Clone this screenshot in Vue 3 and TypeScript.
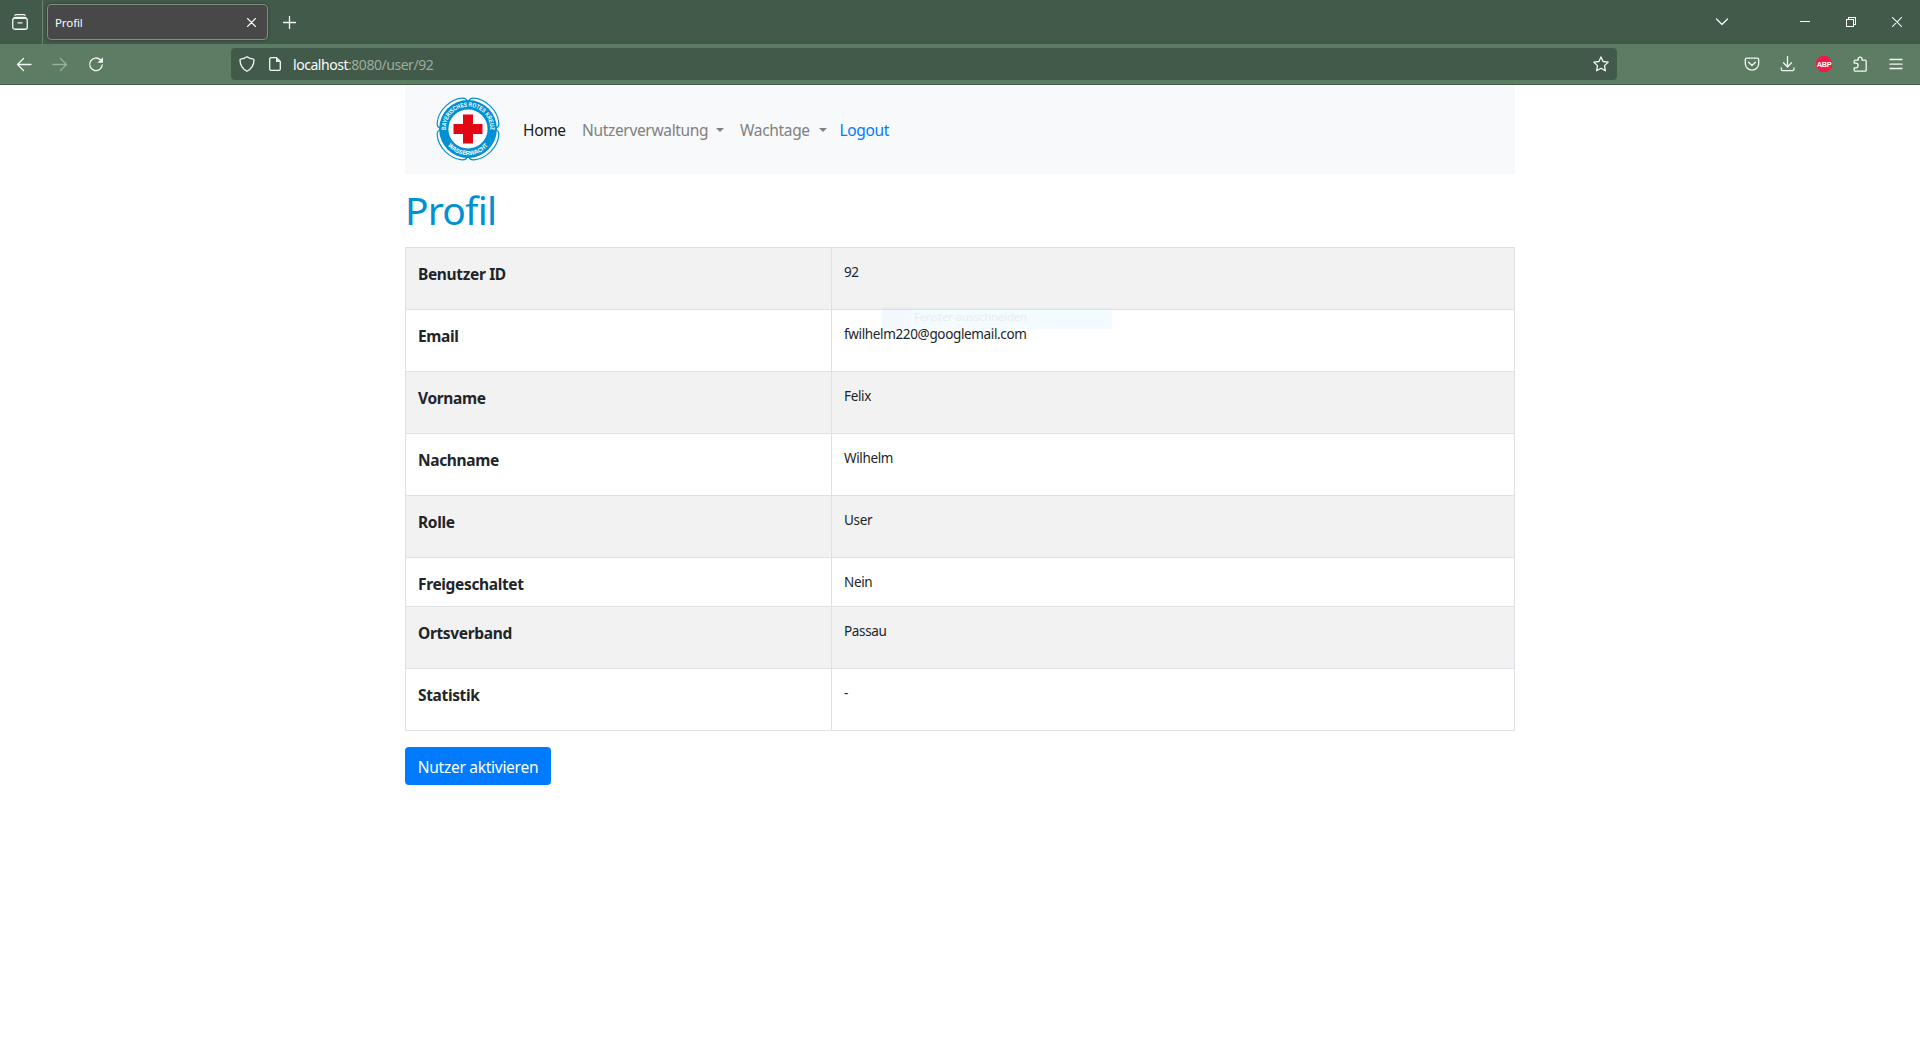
<script setup lang="ts">
interface Row {
  label: string
  value: string
  compact?: boolean
}

const rows: Row[] = [
  { label: 'Benutzer ID', value: '92' },
  { label: 'Email', value: 'fwilhelm220@googlemail.com' },
  { label: 'Vorname', value: 'Felix' },
  { label: 'Nachname', value: 'Wilhelm' },
  { label: 'Rolle', value: 'User' },
  { label: 'Freigeschaltet', value: 'Nein', compact: true },
  { label: 'Ortsverband', value: 'Passau' },
  { label: 'Statistik', value: '-' },
]
</script>

<template>
  <div class="window">
    <header class="tabbar">
      <div class="recent">
        <svg width="16" height="16" viewBox="0 0 16 16" class="line">
          <path d="M3 1.2Q3.3.7 4 .7h8q.7 0 1 .5" />
          <rect x=".75" y="4.25" width="14.5" height="11" rx="2" />
          <path d="M2 4Q2.2 3.3 3 3.3h10q.8 0 1 .7M6 8.8h4" />
        </svg>
      </div>
      <div class="tab">
        <span class="tab-title">Profil</span>
        <svg width="9" height="9" viewBox="0 0 9 9" class="line thin"><path d="M.5.5l8 8M8.500.5l-8 8" /></svg>
      </div>
      <svg class="line plus" width="13" height="13" viewBox="0 0 13 13"><path d="M6.500.5v12M.5 6.500h12" /></svg>
      <div class="window-controls">
        <svg class="line" width="12" height="8" viewBox="0 0 12 8"><path d="M.5 1L6 6.500 11.500 1" /></svg>
        <svg class="line crisp ctl-min" width="10" height="10" viewBox="0 0 10 10"><path d="M0 4.500h10" /></svg>
        <svg class="line crisp ctl-restore" width="10" height="10" viewBox="0 0 10 10">
          <path d="M.5 2.500h7v7h-7zM2.500 2.500v-2h7v7h-2" />
        </svg>
        <svg class="line thin ctl-close" width="10" height="10" viewBox="0 0 10 10"><path d="M0 0l10 10M10 0L0 10" /></svg>
      </div>
    </header>

    <div class="toolbar">
      <div class="history">
        <svg class="line" width="16" height="16" viewBox="0 0 16 16"><path d="M15 8.500H1.500M7.500 2.500l-6 6 6 6" /></svg>
        <svg class="line muted" width="16" height="16" viewBox="0 0 16 16"><path d="M1 8.500h13.500M8.500 2.500l6 6-6 6" /></svg>
        <svg class="line" width="16" height="16" viewBox="0 0 16 16">
          <path d="M12.600 4A6.300 6.300 0 1 0 14.300 8.800" />
          <path class="fill" d="M15 1.200v5.100a.4.4 0 0 1-.4.4H9.500z" />
        </svg>
      </div>
      <div class="urlbar">
        <svg class="line" width="16" height="16" viewBox="0 0 16 16">
          <path d="M8 .7Q5 2.700 1.600 3.100 1 3.200 1 4q.1 7.600 7 11.300Q14.900 11.600 15 4q0-.8-.6-.9Q11 2.700 8 .7z" />
        </svg>
        <svg class="line page" width="12" height="14" viewBox="0 0 12 14">
          <path d="M7.500.7H2A1.300 1.300 0 0 0 .7 2v10A1.300 1.300 0 0 0 2 13.300h8a1.300 1.300 0 0 0 1.300-1.300V4.500z" />
          <path class="fill" d="M7 .7V5h4.500z" />
        </svg>
        <span class="url">localhost<span class="dim">:8080/user/92</span></span>
        <svg class="line star" width="16" height="16" viewBox="0 0 16 16">
          <path d="M8 .9l2.100 4.600 5.100.6-3.700 3.500.9 5.200L8 12.300l-4.400 2.500.9-5.200L.8 6.100l5.100-.6z" />
        </svg>
      </div>
      <div class="actions">
        <svg class="line" width="16" height="16" viewBox="0 0 16 16">
          <path d="M2.800 2.200h10.400q1.500 0 1.500 1.500v3.800a6.700 6.700 0 0 1-13.400 0V3.700q0-1.500 1.500-1.500zM4.600 6.300L8 9.500l3.400-3.200" />
        </svg>
        <svg class="line" width="16" height="16" viewBox="0 0 16 16">
          <path d="M7.500.5v10.300M3.500 6.800l4 4.200 4-4.200M1.300 12v1.300q0 1.400 1.400 1.400h9.900q1.400 0 1.400-1.400V12" />
        </svg>
        <svg class="adblock" width="16" height="16" viewBox="0 0 16 16">
          <path fill="#ed1e45" d="M4.700 0h6.600L16 4.700v6.600L11.300 16H4.700L0 11.300V4.700z" />
          <text x="8" y="11" text-anchor="middle" class="abp">ABP</text>
        </svg>
        <svg class="line" width="16" height="16" viewBox="0 0 16 16">
          <path d="M2.200 7.200V5.200q0-1 1-1h3V3a1.900 1.900 0 0 1 3.800 0v1.200h3.200q1 0 1 1v9q0 1-1 1H3.200q-1 0-1-1v-2.400h1.600a2.200 2.200 0 0 0 0-4.600z" />
        </svg>
        <svg class="line" width="16" height="16" viewBox="0 0 16 16"><path d="M2 3.500h12M2 8.200h12M2 12.500h12" /></svg>
      </div>
    </div>

    <main class="container">
      <nav class="navbar">
        <svg class="logo" width="64" height="64" viewBox="0 0 64 64">
          <defs>
            <path id="arc-top" d="M9.900 34A22.200 22.200 0 1 1 54.100 34" />
            <path id="arc-bottom" d="M5.800 32A26.200 26.200 0 0 0 58.200 32" />
          </defs>
          <g fill="#fff" stroke="#0090d4" stroke-width="1.200">
            <path d="M31 4Q30 .8 26 1.200C14 2 2 14 1.200 26Q.8 30 4 31z" />
            <path d="M33 4Q34 .8 38 1.200C50 2 62 14 62.800 26Q63.200 30 60 31z" />
            <path d="M31 60Q30 63.200 26 62.800C14 62 2 50 1.200 38Q.8 34 4 33z" />
            <path d="M33 60Q34 63.200 38 62.800C50 62 62 50 62.800 38Q63.200 34 60 33z" />
          </g>
          <circle cx="32" cy="32" r="28.900" fill="#0090d4" />
          <circle cx="32" cy="32" r="19.600" fill="#fff" />
          <path fill="#e30613" d="M27 17.500h10V27h9.500v10H37v9.500H27V37h-9.500V27H27z" />
          <text class="logo-text" text-anchor="middle"><textPath href="#arc-top" startOffset="50%" textLength="71" lengthAdjust="spacingAndGlyphs">BAYERISCHES ROTES KREUZ</textPath></text>
          <text class="logo-text" text-anchor="middle"><textPath href="#arc-bottom" startOffset="50%" textLength="46" lengthAdjust="spacingAndGlyphs">WASSERWACHT</textPath></text>
        </svg>
        <ul class="nav">
          <li class="home">Home</li>
          <li class="users">Nutzerverwaltung<i class="caret"></i></li>
          <li class="days">Wachtage<i class="caret"></i></li>
          <li class="logout">Logout</li>
        </ul>
      </nav>

      <h1>Profil</h1>

      <table>
        <tbody>
          <tr v-for="row in rows" :key="row.label" :class="{ compact: row.compact }">
            <th>{{ row.label }}</th>
            <td>{{ row.value }}</td>
          </tr>
        </tbody>
      </table>

      <button type="button">Nutzer aktivieren</button>
    </main>

    <div class="ghost-menu"><span>Fenster ausschneiden</span></div>
  </div>
</template>

<style>
body {
  margin: 0;
  background: #fff;
}
</style>

<style scoped>
.window {
  position: relative;
  height: 1040px;
  overflow: hidden;
  font-family: "Noto Sans", "Open Sans", sans-serif;
  color: #212529;
  background: #fff;
}
svg {
  display: block;
  flex: none;
}
.line {
  fill: none;
  stroke: #f4f7f4;
  stroke-width: 1.3;
  stroke-linecap: round;
  stroke-linejoin: round;
}
.thin {
  stroke-width: 1.1;
}
.crisp {
  stroke-width: 1;
  stroke: #fff;
  stroke-linecap: butt;
  stroke-linejoin: miter;
  shape-rendering: crispEdges;
}
.fill {
  fill: #f4f7f4;
  stroke: none;
}
.muted {
  opacity: 0.4;
}
.tabbar {
  box-sizing: border-box;
  height: 44px;
  display: flex;
  align-items: center;
  background: #425a49;
}
.recent {
  box-sizing: border-box;
  width: 43px;
  height: 44px;
  padding: 14px 0 0 12px;
  border-right: 1px solid #6d8072;
}
.tab {
  box-sizing: border-box;
  width: 221px;
  height: 36px;
  margin-left: 4px;
  padding: 0 11px 0 7px;
  display: flex;
  align-items: center;
  justify-content: space-between;
  background: #484848;
  border: 1px solid #7b907f;
  border-radius: 4px;
  box-shadow: 0 0 3px rgba(0, 0, 0, 0.4);
}
.tab-title {
  padding-top: 1px;
  font-size: 11.5px;
  line-height: 16px;
  color: #fbfbfe;
  letter-spacing: -0.1px;
}
.plus {
  margin: 1px 0 0 15px;
}
.window-controls {
  display: flex;
  align-items: center;
  margin-left: auto;
  padding-right: 18px;
}
.ctl-min {
  margin-left: 72px;
}
.ctl-restore {
  margin-left: 36px;
}
.ctl-close {
  margin-left: 36px;
}
.toolbar {
  box-sizing: border-box;
  height: 41px;
  display: flex;
  align-items: center;
  background: #5c7c64;
  border-bottom: 1px solid #425a49;
}
.history {
  width: 215px;
  padding-left: 16px;
  display: flex;
  gap: 20px;
}
.urlbar {
  box-sizing: border-box;
  width: 1386px;
  height: 32px;
  padding: 0 8px;
  display: flex;
  align-items: center;
  background: #425a49;
  border-radius: 4px;
}
.page {
  margin-left: 14px;
}
.url {
  margin-left: 12px;
  padding-top: 2px;
  font-size: 14px;
  line-height: 20px;
  color: #fbfbfe;
  letter-spacing: -0.46px;
}
.dim {
  color: #9dac9f;
}
.star {
  margin-left: auto;
}
.actions {
  display: flex;
  gap: 20px;
  margin-left: 127px;
}
.adblock {
  overflow: visible;
}
.abp {
  font: 700 7.4px "Liberation Sans Narrow", "Liberation Sans", sans-serif;
  letter-spacing: -0.35px;
  fill: #fff;
}
.container {
  width: 1110px;
  margin: 0 auto;
}
.navbar {
  box-sizing: border-box;
  height: 89px;
  padding: 0 30px 1px 31px;
  display: flex;
  align-items: center;
  background: #f8f9fa;
}
.logo-text {
  font: 700 6.2px "Liberation Sans Narrow", "Liberation Sans", sans-serif;
  fill: #fff;
}
.nav {
  display: flex;
  margin: 1px 0 0 23px;
  padding: 0;
  list-style: none;
  font-size: 15.5px;
  line-height: 24px;
  letter-spacing: -0.33px;
  color: #808182;
}
.nav li {
  display: flex;
  align-items: center;
  white-space: nowrap;
}
.nav .home {
  width: 59px;
  color: #1a1a1a;
}
.nav .users {
  width: 142px;
  margin-right: 16px;
  justify-content: space-between;
}
.nav .days {
  width: 87px;
  margin-right: 12.5px;
  justify-content: space-between;
}
.nav .logout {
  color: #007bff;
}
.caret {
  border: 4px solid transparent;
  border-top-color: currentColor;
  border-bottom: 0;
}
h1 {
  margin: 12px 0 13px;
  height: 48px;
  font-size: 39px;
  font-weight: 400;
  line-height: 47px;
  letter-spacing: -0.8px;
  color: #0090d4;
}
table {
  width: 1110px;
  table-layout: fixed;
  border-collapse: collapse;
}
tr {
  height: 62px;
}
tr.compact {
  height: 49px;
}
tr:nth-child(odd) {
  background: #f2f2f2;
}
th,
td {
  border: 1px solid #dee2e6;
  vertical-align: top;
  text-align: left;
}
th {
  width: 401px;
  padding: 14px 12px 0;
  font-size: 15.5px;
  line-height: 24px;
  letter-spacing: -0.35px;
}
td {
  padding: 14px 12px 0;
  font-size: 13.5px;
  line-height: 21px;
  letter-spacing: -0.35px;
}
button {
  display: block;
  width: 146px;
  height: 38px;
  margin: 16px 0 0;
  padding: 2px 0 0;
  border: 0;
  border-radius: 4px;
  background: #007bff;
  color: #fff;
  font: 15.5px/24px "Noto Sans", "Open Sans", sans-serif;
  letter-spacing: -0.27px;
}
.ghost-menu {
  position: absolute;
  box-sizing: border-box;
  left: 882px;
  top: 307px;
  width: 230px;
  height: 22px;
  padding-left: 32px;
  background: linear-gradient(90deg, rgba(160, 200, 255, 0.12) 29px, rgba(160, 225, 255, 0.12) 29px);
  color: #e9ecee;
  font-size: 11.5px;
  line-height: 20px;
  letter-spacing: -0.25px;
}
</style>
